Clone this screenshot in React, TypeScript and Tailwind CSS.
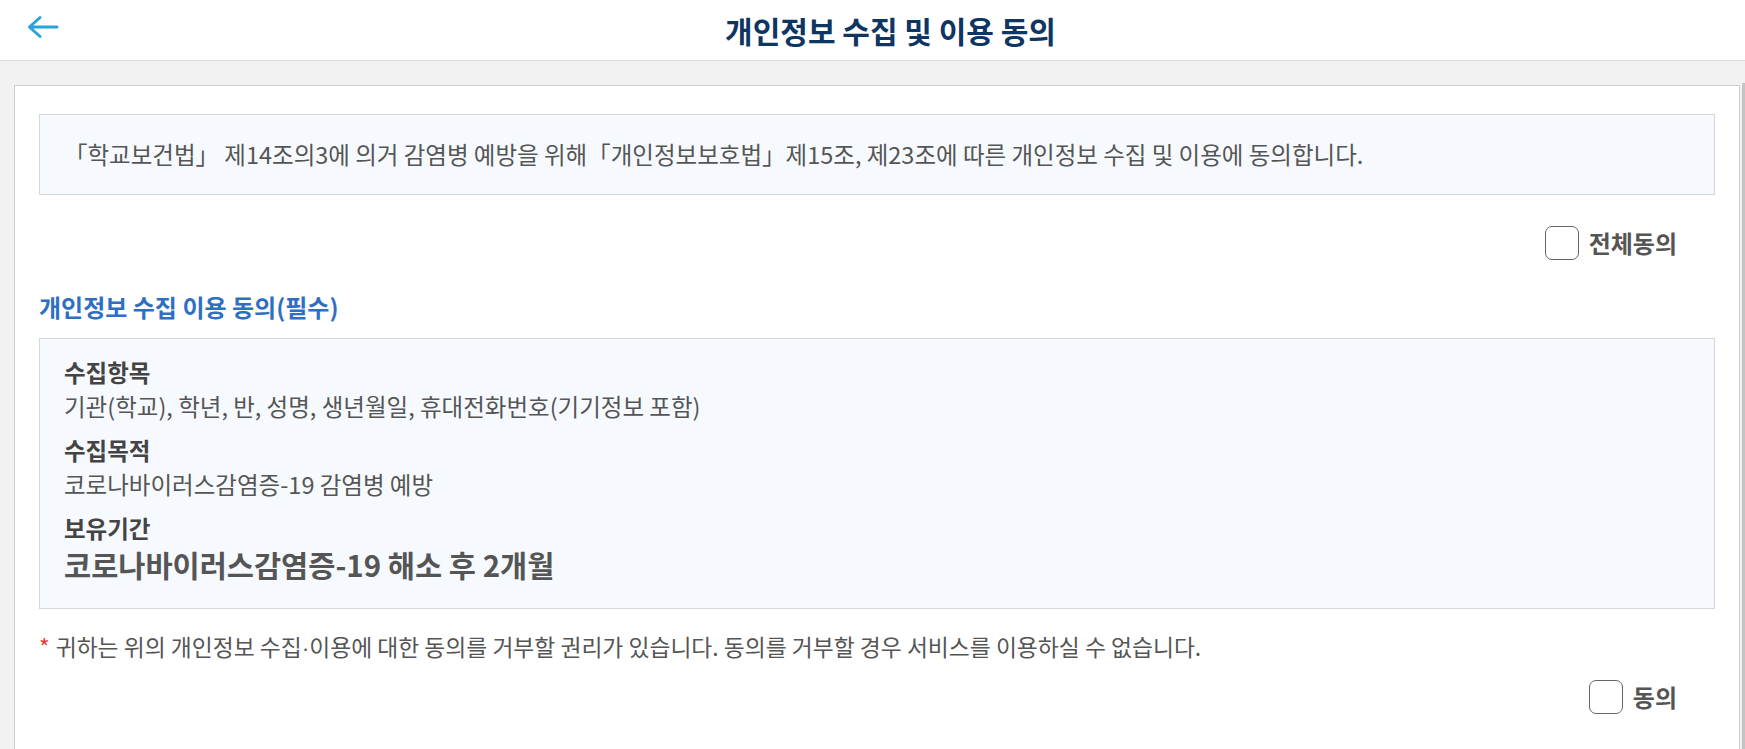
import React from "react";

const FONT = { fontFamily: '"Noto Sans CJK KR", "Noto Sans", sans-serif' };

function Checkbox({ label }: { label: string }) {
  return (
    <label className="flex items-center gap-[10px] cursor-pointer">
      <span className="block h-[34px] w-[34px] rounded-[7px] border border-[#666] bg-white" />
      <span className="text-[24px] font-bold leading-[34px] text-[#555]">{label}</span>
    </label>
  );
}

function Field({ title, children, big }: { title: string; children: React.ReactNode; big?: boolean }) {
  return (
    <div className="flex flex-col">
      <p className="text-[23.5px] font-bold leading-[34px] text-[#444]">{title}</p>
      <p
        className={
          big
            ? "text-[29.5px] font-bold leading-[38px] text-[#555]"
            : "text-[23.5px] leading-[34px] text-[#555]"
        }
      >
        {children}
      </p>
    </div>
  );
}

export default function App() {
  return (
    <div className="min-h-screen bg-white" style={FONT}>
      <header className="relative flex h-[61px] items-center justify-center border-b border-[#dedede] bg-white pl-[36px]">
        <button type="button" className="absolute left-[26px] top-[14px] p-0" aria-label="뒤로">
          <svg width="34" height="26" viewBox="0 0 34 26" fill="none">
            <path
              d="M31 13H4M14 3.5L3.5 13L14 22.5"
              stroke="#27a3dc"
              strokeWidth="3"
              strokeLinecap="round"
              strokeLinejoin="round"
            />
          </svg>
        </button>
        <h1 className="text-[30px] font-bold text-[#0f3563]">개인정보 수집 및 이용 동의</h1>
      </header>

      <div className="flex bg-[#f2f2f2]">
        <main className="flex-1 pl-[14px] pr-[2px] pt-[24px]">
          <section className="border border-[#cfcfcf] bg-white px-[24px] pb-[40px] pt-[28px]">
            <div className="flex h-[81px] items-center border border-[#d3d8dc] bg-[#f6fafe] px-[24px]">
              <p className="text-[23.5px] text-[#555]">
                「학교보건법」 제14조의3에 의거 감염병 예방을 위해「개인정보보호법」제15조, 제23조에 따른 개인정보 수집 및 이용에 동의합니다.
              </p>
            </div>

            <div className="mt-[31px] flex justify-end pr-[38px]">
              <Checkbox label="전체동의" />
            </div>

            <h2 className="mt-[31px] text-[24px] font-semibold leading-[32px] text-[#2f6fc3]">
              개인정보 수집 이용 동의(필수)
            </h2>

            <div className="mt-[15px] flex flex-col gap-[10px] border border-[#d3d8dc] bg-[#f6fafe] px-[24px] pb-[25px] pt-[16px]">
              <Field title="수집항목">기관(학교), 학년, 반, 성명, 생년월일, 휴대전화번호(기기정보 포함)</Field>
              <Field title="수집목적">코로나바이러스감염증-19 감염병 예방</Field>
              <Field title="보유기간" big>
                코로나바이러스감염증-19 해소 후 2개월
              </Field>
            </div>

            <p className="mt-[23px] text-[22.8px] leading-[30px] text-[#555]">
              <span className="mr-[6px] text-[#e43c3c]">*</span>
              귀하는 위의 개인정보 수집
              <span style={{ fontFamily: '"Liberation Sans", sans-serif' }}>·</span>
              이용에 대한 동의를 거부할 권리가 있습니다. 동의를 거부할 경우 서비스를 이용하실 수 없습니다.
            </p>

            <div className="mt-[17px] flex justify-end pr-[38px]">
              <Checkbox label="동의" />
            </div>

            <div className="h-[200px]" />
          </section>
        </main>
        <div className="mt-[22px] w-[3px] bg-[#c4c4c4]" />
      </div>
    </div>
  );
}
